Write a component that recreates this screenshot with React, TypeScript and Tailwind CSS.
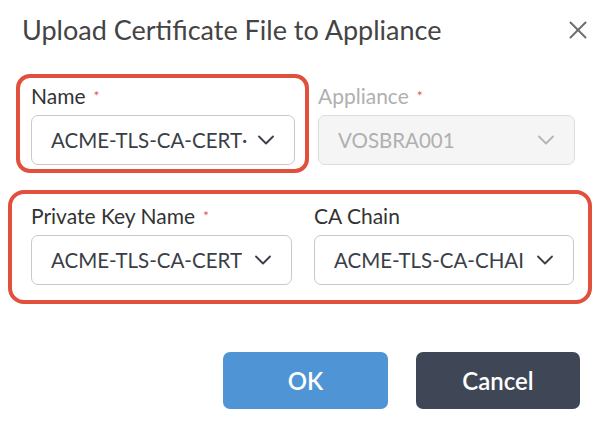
import { X, ChevronDown } from "lucide-react";

function Select({ value, disabled, width }: { value: string; disabled?: boolean; width: string }) {
    return (
        <div
            className={`${width} h-[50px] flex items-center justify-between pl-[19px] pr-[14px] rounded-[7px] border ${disabled
                ? "bg-[#f5f5f5] border-[#dcdcdc] text-[#b0b0b0]"
                : "bg-white border-[#c9c9c9] text-[#3a3f47]"
                }`}
        >
            <span className="text-[20.5px] whitespace-nowrap overflow-hidden">{value}</span>
            <ChevronDown
                className={`w-[28px] h-[28px] shrink-0 ${disabled ? "text-[#b5b5b5]" : "text-[#3a3f47]"}`}
                strokeWidth={1.6}
            />
        </div>
    );
}

function Label({ text, required, muted }: { text: string; required?: boolean; muted?: boolean }) {
    return (
        <div className={`text-[21px] leading-[26px] mb-[6px] ${muted ? "text-[#b0b0b0]" : "text-[#333]"}`}>
            {text}
            {required && <span className="text-[#e0595a] text-[14px] align-top ml-[8px]">*</span>}
        </div>
    );
}

export default function App() {
    return (
        <div className="w-[608px] h-[428px] bg-white overflow-hidden" style={{ fontFamily: "Lato, 'Open Sans', sans-serif" }}>
            <div className="flex items-center justify-between pl-[22px] pr-[15px] pt-[14px] h-[46px]">
                <h1 className="text-[27px] text-[#444] leading-[32px]">Upload Certificate File to Appliance</h1>
                <X className="w-[30px] h-[30px] text-[#6e6e6e]" strokeWidth={1.6} />
            </div>

            <div className="flex items-start mt-[28px] ml-[16px]">
                <div className="w-[293px] border-[4px] border-[#e0503d] rounded-[14px] pl-[11px] pt-[5px] pb-[4px]">
                    <Label text="Name" required />
                    <Select value="ACME-TLS-CA-CERT·" width="w-[264px]" />
                </div>
                <div className="ml-[9px] pt-[9px]">
                    <Label text="Appliance" required muted />
                    <Select value="VOSBRA001" disabled width="w-[257px]" />
                </div>
            </div>

            <div className="ml-[8px] mt-[17px] w-[584px] border-[4px] border-[#e0503d] rounded-[16px] pl-[19px] pr-[14px] pt-[9px] pb-[15px] flex gap-[22px]">
                <div>
                    <Label text="Private Key Name" required />
                    <Select value="ACME-TLS-CA-CERT" width="w-[261px]" />
                </div>
                <div>
                    <Label text="CA Chain" />
                    <Select value="ACME-TLS-CA-CHAI" width="w-[260px]" />
                </div>
            </div>

            <div className="flex justify-end gap-[28px] pr-[28px] mt-[48px]">
                <button className="w-[165px] h-[57px] rounded-[7px] bg-[#4f95d6] text-white text-[24px] font-semibold">OK</button>
                <button className="w-[164px] h-[57px] rounded-[7px] bg-[#3f4757] text-white text-[24px] font-semibold">Cancel</button>
            </div>
        </div>
    );
}
